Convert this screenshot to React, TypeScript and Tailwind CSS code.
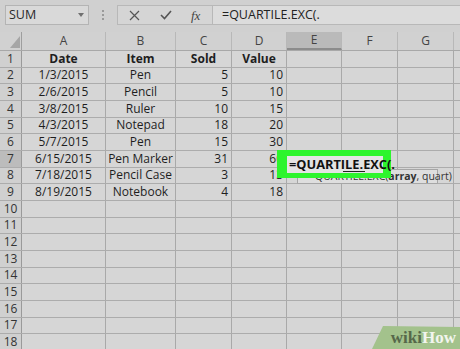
import React from "react";

const cols = [84, 70, 56, 55, 55, 56, 56, 40];
const letters = ["A", "B", "C", "D", "E", "F", "G", ""];

type Row = [string, string, string, string];
const data: Row[] = [
  ["Date", "Item", "Sold", "Value"],
  ["1/3/2015", "Pen", "5", "10"],
  ["2/6/2015", "Pencil", "5", "10"],
  ["3/8/2015", "Ruler", "10", "15"],
  ["4/3/2015", "Notepad", "18", "20"],
  ["5/7/2015", "Pen", "15", "30"],
  ["6/15/2015", "Pen Marker", "31", "60"],
  ["7/18/2015", "Pencil Case", "3", "13"],
  ["8/19/2015", "Notebook", "4", "18"],
];

export default function App() {
  const rows = Array.from({ length: 18 }, (_, i) => i + 1);
  return (
    <div
      className="relative w-[460px] h-[349px] overflow-hidden bg-[#d3d3d3] text-[#1e1e1e]"
      style={{ fontFamily: '"Open Sans", "Noto Sans", sans-serif' }}
    >
      {/* toolbar */}
      <div className="h-[32px] flex items-start pt-[5px] bg-[#d0d0d0]">
        <div className="ml-[5px] w-[84px] h-[20px] border border-[#b4b4b4] bg-[#d9d9d9] flex items-center justify-between pl-[3px] pr-[4px]">
          <span className="text-[12.5px] leading-none text-[#2a2a2a]">SUM</span>
          <svg width="6" height="4" viewBox="0 0 6 4"><path d="M0 0 L6 0 L3 4 Z" fill="#707070" /></svg>
        </div>
        <div className="w-[28px] h-[20px] flex flex-col items-center justify-center gap-[2px]">
          <span className="w-[2px] h-[2px] bg-[#9a9a9a]" />
          <span className="w-[2px] h-[2px] bg-[#9a9a9a]" />
          <span className="w-[2px] h-[2px] bg-[#9a9a9a]" />
        </div>
        <div className="w-[96px] h-[20px] border border-[#b8b8b8] bg-[#d5d5d5] flex items-center">
          <svg className="ml-[11px]" width="11" height="11" viewBox="0 0 11 11">
            <path d="M1 1 L10 10 M10 1 L1 10" stroke="#555" strokeWidth="1.2" />
          </svg>
          <svg className="ml-[20px]" width="12" height="10" viewBox="0 0 12 10">
            <path d="M1 5 L4.5 8.5 L11 1" stroke="#555" strokeWidth="1.6" fill="none" />
          </svg>
          <span
            className="ml-[19px] text-[13px] italic leading-none text-[#444]"
            style={{ fontFamily: '"Liberation Serif", serif' }}
          >
            fx
          </span>
        </div>
        <div className="flex-1 h-[20px] border-y border-[#b8b8b8] bg-[#dcdcdc] flex items-center pl-[9px]">
          <span className="text-[12.5px] leading-none text-[#222] whitespace-nowrap">=QUARTILE.EXC(.</span>
        </div>
      </div>

      {/* header row */}
      <div className="flex h-[19px] bg-[#d1d1d1] border-b border-[#a8a8a8]">
        <div className="w-[22px] shrink-0 border-r border-[#9e9e9e] flex items-end justify-end pr-[1px] pb-[2px]">
          <svg width="10" height="12" viewBox="0 0 10 12"><path d="M10 0 L10 12 L0 12 Z" fill="#a6a6a6" /></svg>
        </div>
        {cols.map((w, i) => (
          <div
            key={i}
            className={`shrink-0 border-r border-[#b8b8b8] flex items-center justify-center text-[12px] text-[#444] ${
              i === 4 ? "bg-[#bababa] border-b-2 border-b-[#8c8c8c]" : ""
            }`}
            style={{ width: w }}
          >
            {letters[i]}
          </div>
        ))}
      </div>

      {/* rows */}
      {rows.map((r) => {
        const d = data[r - 1];
        return (
          <div key={r} className="flex h-[16.67px] border-b border-[#acacac] bg-[#d6d6d6]">
            <div
              className={`w-[22px] shrink-0 border-r border-[#9a9a9a] flex items-center justify-center text-[12px] text-[#333] ${
                r === 7 ? "bg-[#bcbcbc]" : "bg-[#d0d0d0]"
              }`}
            >
              {r}
            </div>
            {cols.map((w, i) => {
              let content = "";
              let align = "justify-center";
              if (d && i < 4) {
                content = d[i];
                if (r > 1 && (i === 2 || i === 3)) align = "justify-end pr-[3px]";
              }
              return (
                <div
                  key={i}
                  className={`shrink-0 border-r border-[#a9a9a9] flex items-center ${align} text-[12px] leading-none whitespace-nowrap ${
                    r === 1 ? "font-bold" : ""
                  }`}
                  style={{ width: w }}
                >
                  {content}
                </div>
              );
            })}
          </div>
        );
      })}

      {/* tooltip */}
      <div className="absolute left-[297px] top-[169px] w-[141px] h-[15px] bg-[#dedede] border border-[#a6a6a6] flex items-center pl-[17px] text-[10.5px] text-[#333] whitespace-nowrap">
        QUARTILE.EXC(<b>array</b>, quart)
      </div>

      {/* green highlight with editing cell */}
      <div className="absolute left-[277px] top-[150px] w-[114px] h-[28px] bg-[#2df52d] flex items-center pl-[10px]">
        <div className="w-[96px] h-[17px] bg-[#e4e4e4] flex items-center pl-[2px] relative">
          <span className="shrink-0 text-[12.8px] font-bold leading-none text-[#111] whitespace-nowrap">=QUARTILE.EXC(.</span>
          <span className="absolute left-[56px] top-[15px] w-[22px] h-[1px] bg-[#222]" />
        </div>
      </div>

      {/* wikiHow logo */}
      <svg className="absolute right-0 bottom-0" width="88" height="23" viewBox="0 0 88 23">
        <path d="M11 0 L88 1 L88 23 L0 23 Z" fill="#a3c28c" />
      </svg>
      <div
        className="absolute right-[4px] bottom-[3px] text-[17px] font-bold leading-none whitespace-nowrap"
        style={{ fontFamily: '"Liberation Serif", serif' }}
      >
        <span className="text-[#56684a]">wiki</span>
        <span className="text-[#f2f5ef]">How</span>
      </div>
    </div>
  );
}
